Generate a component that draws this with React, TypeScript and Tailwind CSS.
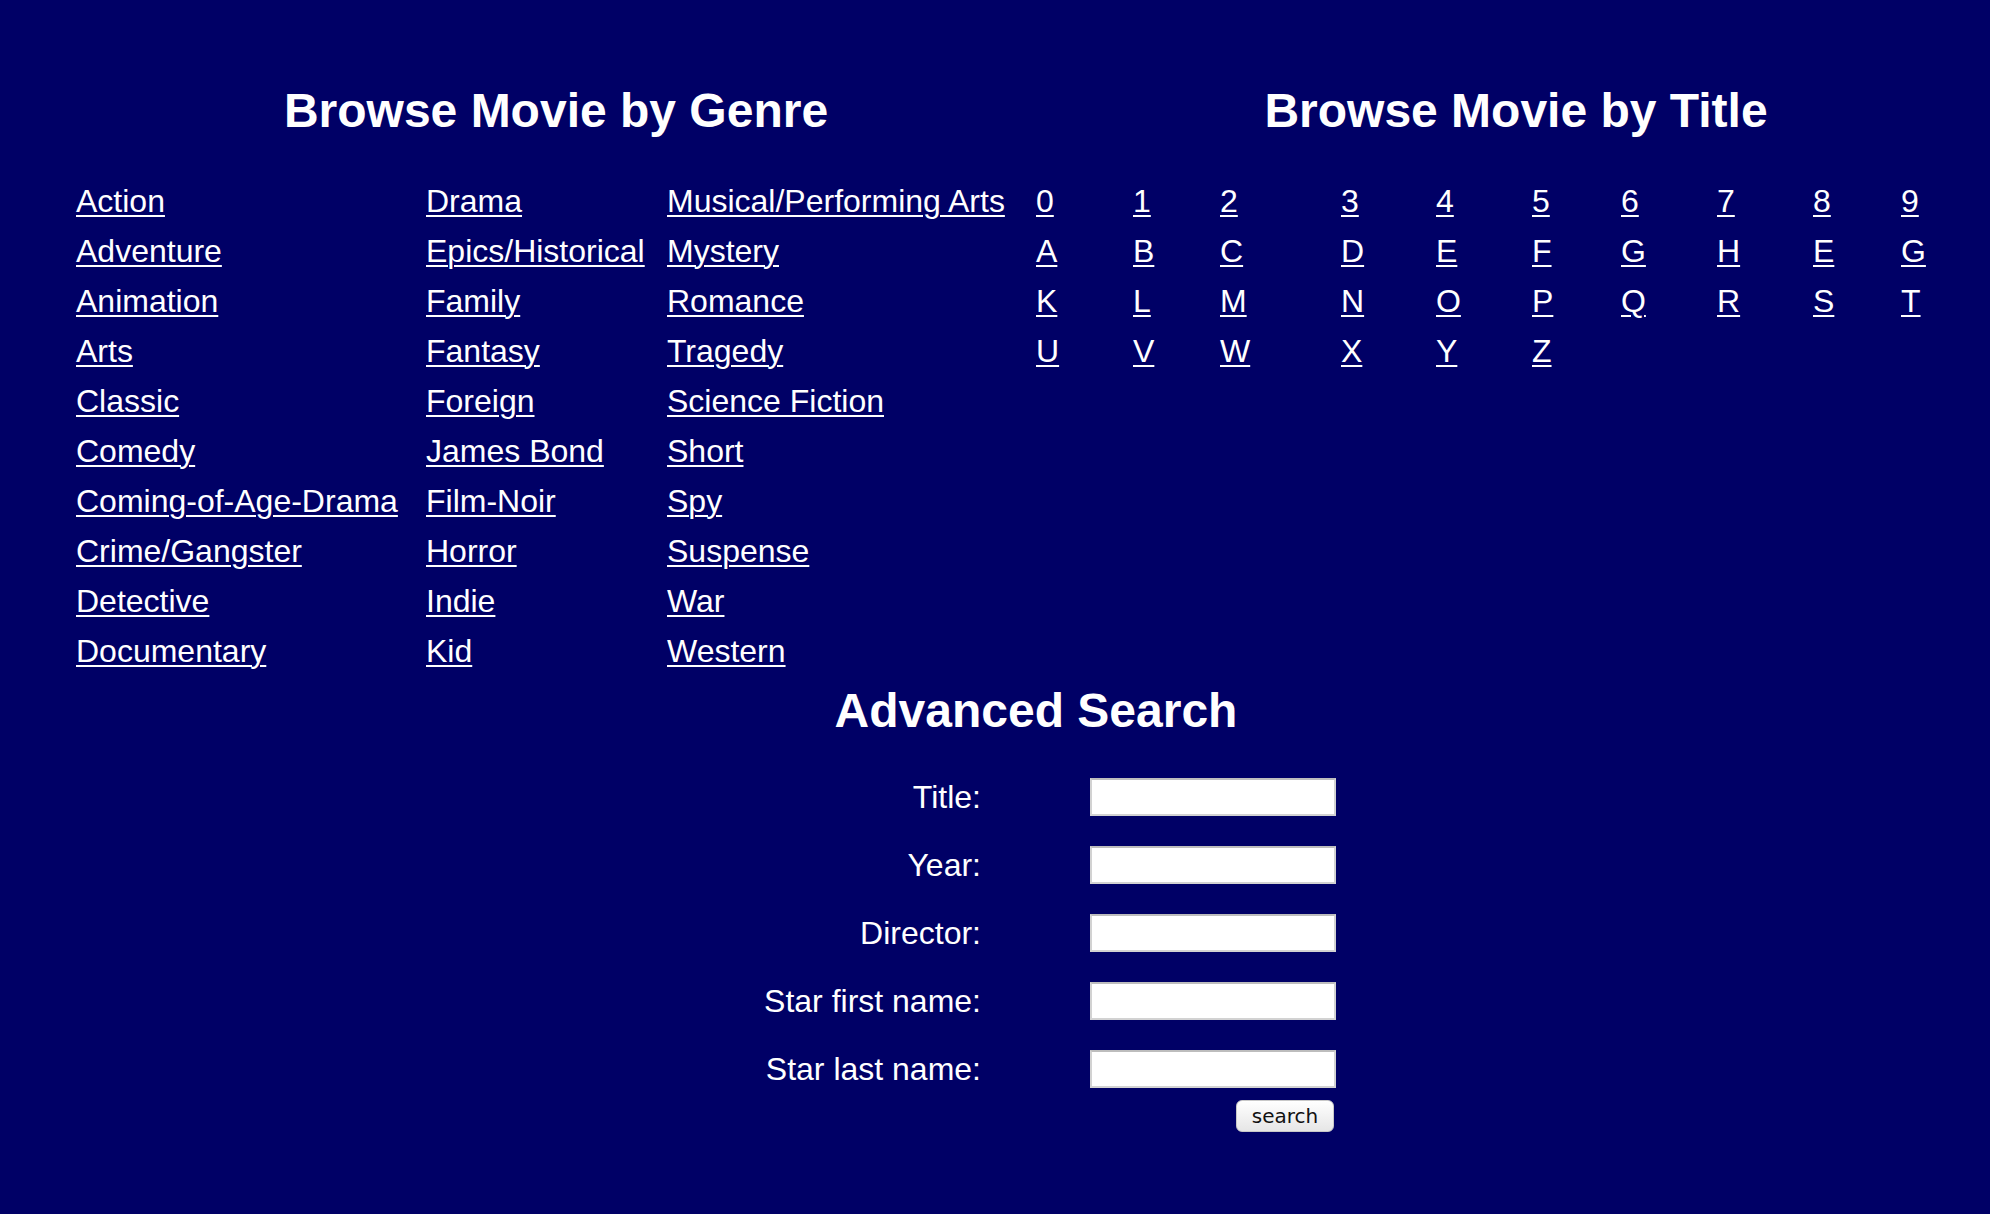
import React from "react";

const col1 = ["Action","Adventure","Animation","Arts","Classic","Comedy","Coming-of-Age-Drama","Crime/Gangster","Detective","Documentary"];
const col2 = ["Drama","Epics/Historical","Family","Fantasy","Foreign","James Bond","Film-Noir","Horror","Indie","Kid"];
const col3 = ["Musical/Performing Arts","Mystery","Romance","Tragedy","Science Fiction","Short","Spy","Suspense","War","Western"];

const titles = [
  ["0","1","2","3","4","5","6","7","8","9"],
  ["A","B","C","D","E","F","G","H","E","G"],
  ["K","L","M","N","O","P","Q","R","S","T"],
  ["U","V","W","X","Y","Z"],
];

const fields = ["Title:", "Year:", "Director:", "Star first name:", "Star last name:"];

function LinkCol({ items }: { items: string[] }) {
  return (
    <div className="flex flex-col">
      {items.map((g) => (
        <div key={g} className="h-[50px] flex items-center">
          <a href="#" className="underline decoration-2 underline-offset-[3px] text-white whitespace-nowrap">{g}</a>
        </div>
      ))}
    </div>
  );
}

export default function App() {
  return (
    <div className="min-h-screen w-full overflow-hidden bg-[#000066] text-white" style={{ fontFamily: '"Liberation Sans", Arial, Helvetica, sans-serif' }}>
      <div className="w-[2072px] text-[32px] leading-[37px]">
        <div className="flex pl-[76px] pt-[83px]">
          <div className="w-[960px] flex flex-col">
            <h2 className="text-center text-[48px] leading-[55px] font-bold">Browse Movie by Genre</h2>
            <div className="mt-[38px] grid grid-cols-[350px_241px_369px]">
              <LinkCol items={col1} />
              <LinkCol items={col2} />
              <LinkCol items={col3} />
            </div>
          </div>
          <div className="w-[960px] flex flex-col">
            <h2 className="text-center text-[48px] leading-[55px] font-bold">Browse Movie by Title</h2>
            <div className="mt-[38px] grid grid-cols-[97px_87px_121px_95px_96px_89px_96px_96px_88px_60px]">
              {titles.flat().map((t, i) => (
                <div key={i} className="h-[50px] flex items-center">
                  <a href="#" className="underline decoration-2 underline-offset-[3px] text-white">{t}</a>
                </div>
              ))}
            </div>
          </div>
        </div>
        <h2 className="mt-[7px] text-center text-[48px] leading-[55px] font-bold">Advanced Search</h2>
        <div className="ml-[700px] mt-[40px] w-[636px] flex flex-col gap-[30px]">
          {fields.map((f) => (
            <div key={f} className="flex items-center h-[38px]">
              <label className="w-[281px] text-right whitespace-nowrap">{f}</label>
              <input type="text" className="ml-[109px] w-[246px] h-[38px] bg-white border-2 border-[#d2d2d2] border-t-[#bdbdbd] outline-none" />
            </div>
          ))}
        </div>
        <div className="ml-[1236px] mt-[6px]">
          <button className="w-[98px] h-[32px] rounded-[6px] bg-gradient-to-b from-white to-[#e6e6e6] border border-[#c8c8c8] text-[#111] text-[20px] leading-[30px]" style={{ fontFamily: '"DejaVu Sans", sans-serif' }}>search</button>
        </div>
      </div>
    </div>
  );
}
